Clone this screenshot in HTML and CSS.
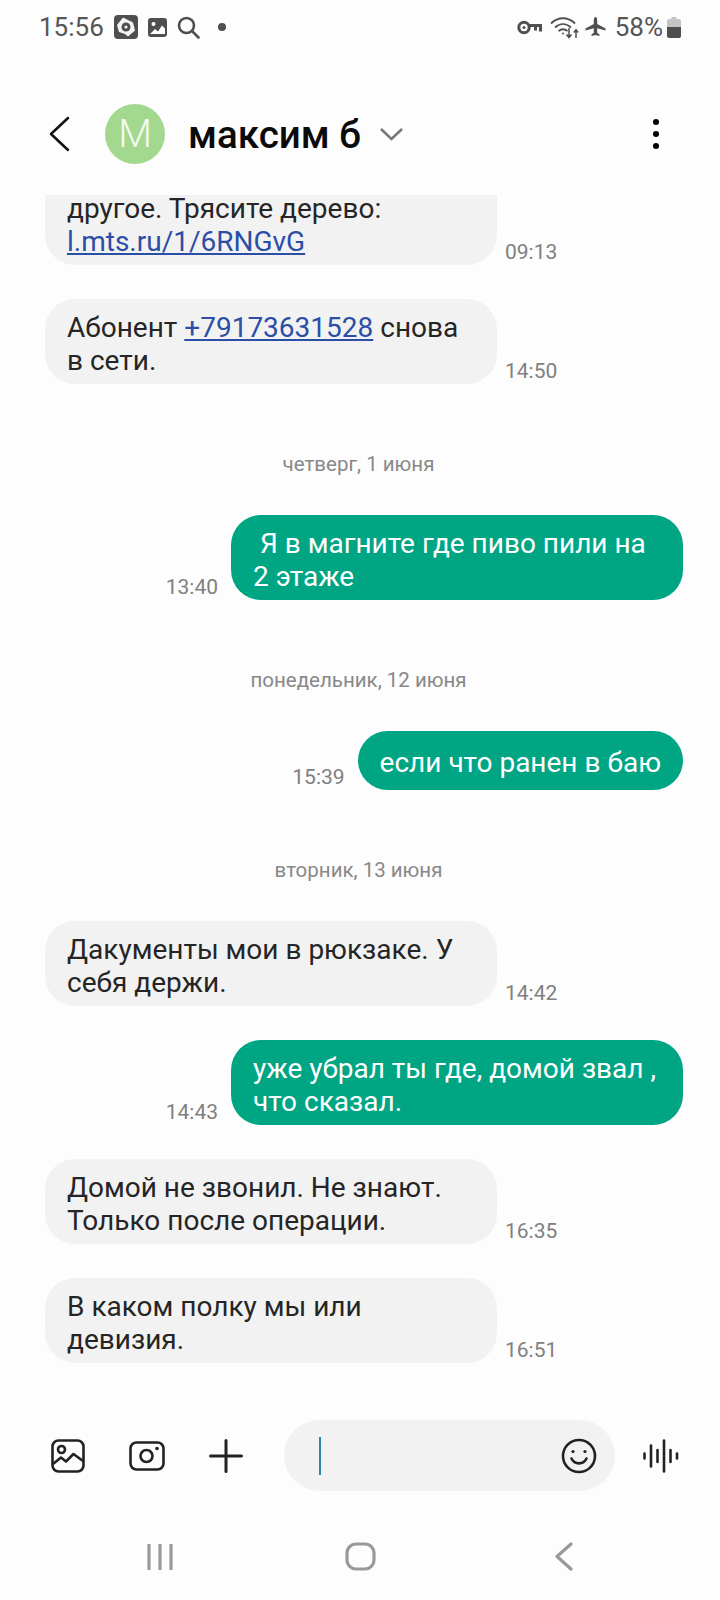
FILE: index.html
```html
<!DOCTYPE html>
<html lang="ru">
<head>
    <meta charset="UTF-8">
    <meta name="viewport" content="width=device-width, initial-scale=1.0">
    <title>максим б</title>
    <link rel="stylesheet" href="styles.css">
</head>
<body>

<div class="phone">
    <!-- status bar -->
    <div class="status-bar">
        <div class="status-left">
            <span class="clock">15:56</span>
            <svg class="app-icon" width="24" height="24" viewBox="0 0 24 24">
                <rect width="24" height="24" rx="4" fill="#4f4f4f"/>
                <path d="M9 2.500l10 5 2 8-7 6-3-2.500-6-2-2-7z" fill="#f4f4f4"/>
                <circle cx="12" cy="12" r="4.500" fill="#4f4f4f"/>
                <circle cx="12" cy="12" r="1.600" fill="#f4f4f4"/>
            </svg>
            <svg class="gallery-icon" width="19" height="19" viewBox="0 0 19 19">
                <rect width="19" height="19" rx="3" fill="#4f4f4f"/>
                <circle cx="5.500" cy="6" r="2" fill="#fff"/>
                <path d="M2 16l5-5 3 2.500 4-6 3 3v5.500z" fill="#fff"/>
            </svg>
            <svg class="search-icon" width="23" height="23" viewBox="0 0 23 23" fill="none" stroke="#4f4f4f" stroke-width="2.600">
                <circle cx="9.500" cy="9.500" r="7.500"/>
                <path d="M15 15l6.500 6.500" stroke-linecap="round"/>
            </svg>
            <span class="status-dot"></span>
        </div>
        <div class="status-right">
            <svg width="25" height="15" viewBox="0 0 25 15" fill="none" stroke="#4f4f4f" stroke-width="3">
                <circle cx="7" cy="7.500" r="5.200"/>
                <path d="M12 5.500h11.500v6M18.500 5.500v5"/>
                <circle cx="7" cy="7.500" r="1.500" fill="#4f4f4f" stroke="none"/>
            </svg>
            <svg class="wifi-icon" width="30" height="23" viewBox="0 0 30 23" fill="none" stroke="#4f4f4f" stroke-width="1.800">
                <path d="M1 7.500c7-7 17-7 24 0"/>
                <path d="M5 11.500c5-4.500 11-4.500 16 0"/>
                <path d="M8.500 15c3-2.400 6-2.400 9 0"/>
                <circle cx="13" cy="17.500" r="1" fill="#4f4f4f" stroke="none"/>
                <path d="M19 12v9M16.500 18.500l2.500 3 2.500-3M26 22v-8M23.800 16.500l2.200-2.800 2.200 2.800" stroke-width="1.500"/>
            </svg>
            <svg width="21" height="21" viewBox="0 0 21 21">
                <path d="M10.500 0c1 0 1.700 1.500 1.700 3.500v3.600l8.300 4.400v2l-8.300-2.300v4.600l2.300 1.700v1.500l-4-1-4 1v-1.500l2.300-1.700v-4.600L.5 13.500v-2l8.300-4.400V3.500c0-2 .7-3.500 1.700-3.500z" fill="#4f4f4f"/>
            </svg>
            <span class="battery-text">58%</span>
            <svg class="battery" width="14" height="21" viewBox="0 0 14 21">
                <path d="M4.500 0h5v2h2.500a2 2 0 0 1 2 2v6H0V4a2 2 0 0 1 2-2h2.500z" fill="#c4c4c4"/>
                <path d="M0 10h14v9a2 2 0 0 1-2 2H2a2 2 0 0 1-2-2z" fill="#4f4f4f"/>
            </svg>
        </div>
    </div>

    <!-- header -->
    <div class="header">
        <svg class="back-icon" width="21" height="36" viewBox="0 0 21 36" fill="none" stroke="#111" stroke-width="2.500" stroke-linecap="round" stroke-linejoin="round">
            <path d="M19 2L2 18l17 16"/>
        </svg>
        <div class="avatar">M</div>
        <span class="contact-name">максим б</span>
        <svg class="name-chevron" width="23" height="14" viewBox="0 0 23 14" fill="none" stroke="#777" stroke-width="2.500">
            <path d="M1 2l10.500 10L22 2"/>
        </svg>
        <div class="kebab"><span></span><span></span><span></span></div>
    </div>

    <!-- messages -->
    <div class="messages">
        <div class="row">
            <div class="bubble bubble-clipped">другое. Трясите дерево:<br><a href="#">l.mts.ru/1/6RNGvG</a></div>
            <span class="time">09:13</span>
        </div>
        <div class="row">
            <div class="bubble">Абонент <a href="#">+79173631528</a> снова в сети.</div>
            <span class="time">14:50</span>
        </div>

        <div class="date">четверг, 1 июня</div>
        <div class="row row-sent">
            <span class="time">13:40</span>
            <div class="bubble bubble-sent">&nbsp;Я в магните где пиво пили на 2 этаже</div>
        </div>

        <div class="date">понедельник, 12 июня</div>
        <div class="row row-sent">
            <span class="time">15:39</span>
            <div class="bubble bubble-sent bubble-short">если что ранен в баю</div>
        </div>

        <div class="date">вторник, 13 июня</div>
        <div class="row">
            <div class="bubble">Дакументы мои в рюкзаке. У себя держи.</div>
            <span class="time">14:42</span>
        </div>
        <div class="row row-sent">
            <span class="time">14:43</span>
            <div class="bubble bubble-sent">уже убрал ты где, домой звал , что сказал.</div>
        </div>
        <div class="row">
            <div class="bubble">Домой не звонил. Не знают. Только после операции.</div>
            <span class="time">16:35</span>
        </div>
        <div class="row">
            <div class="bubble">В каком полку мы или девизия.</div>
            <span class="time">16:51</span>
        </div>
    </div>

    <!-- composer -->
    <div class="composer">
        <svg width="34" height="34" viewBox="0 0 34 34" fill="none" stroke="#222" stroke-width="2.600" stroke-linejoin="round">
            <rect x="1.500" y="1.500" width="31" height="31" rx="6"/>
            <circle cx="10.500" cy="10.500" r="3.500"/>
            <path d="M2 25l8-6.500 5 4 7.500-7.500L32 22"/>
        </svg>
        <svg class="camera-icon" width="36" height="30" viewBox="0 0 36 30" fill="none" stroke="#222" stroke-width="2.600">
            <rect x="1.500" y="1.500" width="33" height="27" rx="6"/>
            <circle cx="17.500" cy="15" r="6"/>
            <circle cx="28" cy="7.500" r="1.800" fill="#222" stroke="none"/>
        </svg>
        <svg class="plus-icon" width="34" height="34" viewBox="0 0 34 34" fill="none" stroke="#222" stroke-width="3" stroke-linecap="round">
            <path d="M17 1.500v31M1.500 17h31"/>
        </svg>
        <div class="input-box">
            <span class="caret"></span>
            <svg width="36" height="36" viewBox="0 0 36 36" fill="none" stroke="#222" stroke-width="2.600" stroke-linecap="round">
                <circle cx="18" cy="18" r="16"/>
                <path d="M10.500 20.500c3 6.500 12 6.500 15 0"/>
                <circle cx="12" cy="13.500" r="1.600" fill="#222" stroke="none"/>
                <circle cx="24" cy="13.500" r="1.600" fill="#222" stroke="none"/>
            </svg>
        </div>
        <svg class="voice-icon" width="36" height="34" viewBox="0 0 36 34" fill="none" stroke="#222" stroke-width="2.600" stroke-linecap="round">
            <path d="M1.500 14.500v5M8 6.500v21M14.500 11v12M21 1.500v31M27.500 11v12M34 14.500v5"/>
        </svg>
    </div>

    <!-- android nav -->
    <div class="nav-bar">
        <svg width="28" height="28" viewBox="0 0 28 28" fill="none" stroke="#999" stroke-width="3.200">
            <path d="M3 1v26M14 1v26M25 1v26"/>
        </svg>
        <svg width="31" height="29" viewBox="0 0 31 29" fill="none" stroke="#999" stroke-width="3.200">
            <rect x="2" y="2" width="27" height="25" rx="9"/>
        </svg>
        <svg class="nav-back" width="18" height="29" viewBox="0 0 18 29" fill="none" stroke="#999" stroke-width="3.200" stroke-linecap="round" stroke-linejoin="round">
            <path d="M16 2L2 14.500 16 27"/>
        </svg>
    </div>
</div>

</body>
</html>
```

FILE: styles.css
```css
* {
    box-sizing: border-box;
}
body {
    margin: 0;
    font-family: Roboto, "Noto Sans", sans-serif;
    background-color: #fdfdfd;
}
.phone {
    width: 720px;
    height: 1600px;
    display: flex;
    flex-direction: column;
    overflow: hidden;
}

/* status bar */
.status-bar {
    height: 54px;
    padding: 0 39px 0 39px;
    display: flex;
    justify-content: space-between;
    align-items: center;
    color: #555;
}
.status-left,
.status-right {
    display: flex;
    align-items: center;
}
.clock {
    font-size: 26px;
    margin-right: 10px;
}
.gallery-icon {
    margin-left: 10px;
}
.search-icon {
    margin-left: 10px;
}
.status-dot {
    width: 8px;
    height: 8px;
    margin-left: 18px;
    border-radius: 50%;
    background-color: #4f4f4f;
}
.wifi-icon {
    margin: 0 5px 0 8px;
}
.battery-text {
    font-size: 26px;
    margin-left: 9px;
}
.battery {
    margin-left: 4px;
}

/* header */
.header {
    height: 141px;
    padding: 19px 61px 0 49px;
    display: flex;
    align-items: center;
}
.avatar {
    width: 60px;
    height: 60px;
    margin-left: 35px;
    border-radius: 50%;
    background-color: #a3d98f;
    color: #f3fbef;
    font-size: 39px;
    font-weight: 300;
    display: flex;
    align-items: center;
    justify-content: center;
}
.contact-name {
    margin-left: 23px;
    font-size: 38.5px;
    font-weight: 500;
    color: #0b0b0b;
}
.name-chevron {
    margin-left: 19px;
}
.kebab {
    margin-left: auto;
    display: flex;
    flex-direction: column;
    gap: 6px;
}
.kebab span {
    width: 6px;
    height: 6px;
    border-radius: 50%;
    background-color: #000;
}

/* messages */
.messages {
    height: 1205px;
    padding: 0 37px 37px 45px;
    display: flex;
    flex-direction: column;
    justify-content: flex-end;
    overflow: hidden;
}
.row {
    display: flex;
    align-items: flex-end;
    gap: 8px;
    flex-shrink: 0;
    margin-bottom: 34px;
}
.row:last-child {
    margin-bottom: 0;
}
.row-sent {
    justify-content: flex-end;
    gap: 13px;
}
.bubble {
    width: 452px;
    padding: 12px 23px 7px 22px;
    border-radius: 30px;
    background-color: #f2f2f2;
    color: #252525;
    font-size: 28px;
    line-height: 33px;
}
.bubble a {
    color: #2b4ea6;
}
.bubble-clipped {
    padding-top: 40px;
    border-radius: 0 0 30px 30px;
}
.bubble-sent {
    background-color: #00a584;
    color: #fff;
}
.bubble-short {
    width: auto;
    padding: 15px 22px 11px;
}
.time {
    font-size: 21px;
    line-height: 24px;
    margin-bottom: 1px;
    color: #808080;
}
.date {
    flex-shrink: 0;
    margin-right: 11px;
    padding: 34px 0 39px;
    font-size: 20.5px;
    line-height: 24px;
    text-align: center;
    color: #888;
}

/* composer */
.composer {
    height: 71px;
    margin-top: 20px;
    padding-left: 51px;
    display: flex;
    align-items: center;
    flex-shrink: 0;
}
.camera-icon {
    margin-left: 44px;
}
.plus-icon {
    margin-left: 44px;
}
.input-box {
    width: 331px;
    height: 71px;
    margin-left: 41px;
    padding: 0 18px 0 35px;
    border-radius: 36px;
    background-color: #f2f2f2;
    display: flex;
    align-items: center;
    justify-content: space-between;
}
.caret {
    width: 2px;
    height: 38px;
    background-color: #2e86ab;
}
.voice-icon {
    margin-left: 28px;
}

/* android nav */
.nav-bar {
    flex: 1;
    padding: 0 58px 29px 60px;
    display: grid;
    grid-template-columns: repeat(3, 1fr);
    justify-items: center;
    align-items: end;
}
.nav-back {
    margin-left: 4px;
}
```
